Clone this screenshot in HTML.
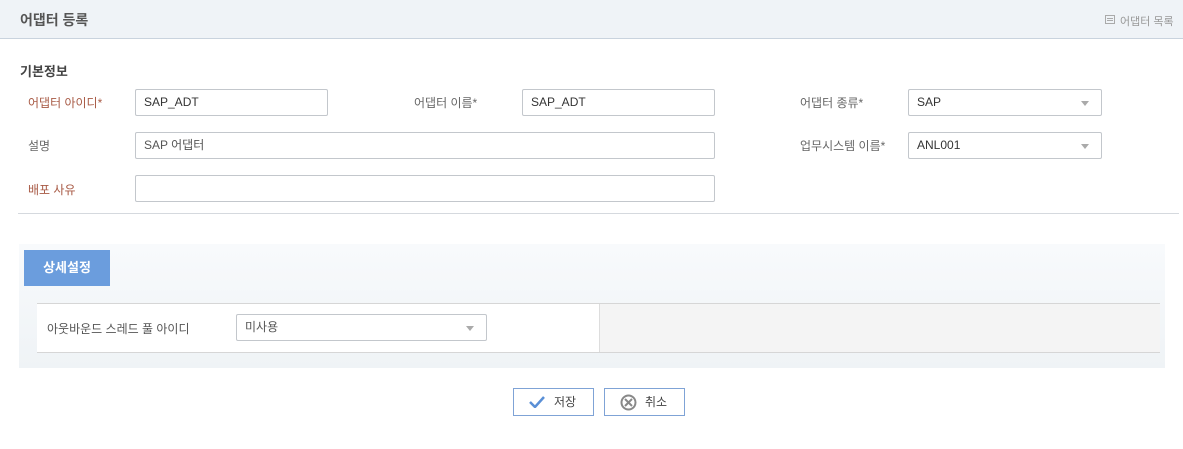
<!DOCTYPE html>
<html><head><meta charset="utf-8"><style>
*{box-sizing:border-box;margin:0;padding:0}
body{width:1183px;height:449px;background:#fff;font-family:"Liberation Sans","Noto Sans CJK KR",sans-serif;font-size:12px;color:#555;position:relative;overflow:hidden}
.a{position:absolute}
.hdr{left:0;top:0;width:1183px;height:39px;background:#eff3f7;border-bottom:1px solid #c9d3de}
.lbl{font-size:12px;color:#666;line-height:14px}
.req{color:#a85a45}
.inp{border:1px solid #c3c7cc;border-radius:2px;background:#fff;height:27px;padding-left:8px;line-height:25px;color:#333;font-size:12px}
.tri{position:absolute;right:12px;top:11px;width:0;height:0;border-left:4px solid transparent;border-right:4px solid transparent;border-top:5px solid #aaa}
.btn{border:1px solid #7fa3d6;background:#fff;height:28px;width:81px;line-height:26px;font-size:12px;color:#444}
</style></head><body>
<div class="a hdr"></div>
<div class="a" style="left:20px;top:10px;font-size:14px;color:#555;font-weight:bold">어댑터 등록</div>
<div class="a" style="left:1105px;top:15px;width:10px;height:9px;border:1px solid #aaa"></div>
<div class="a" style="left:1107px;top:18px;width:6px;height:1px;background:#aaa"></div>
<div class="a" style="left:1107px;top:20px;width:6px;height:1px;background:#aaa"></div>
<div class="a" style="left:1120px;top:13px;font-size:11px;color:#999">어댑터 목록</div>
<div class="a" style="left:20px;top:61px;font-size:13px;font-weight:bold;color:#444">기본정보</div>

<div class="a lbl req" style="left:28px;top:96px">어댑터 아이디*</div>
<div class="a inp" style="left:135px;top:89px;width:193px">SAP_ADT</div>
<div class="a lbl" style="left:414px;top:96px">어댑터 이름*</div>
<div class="a inp" style="left:522px;top:89px;width:193px">SAP_ADT</div>
<div class="a lbl" style="left:800px;top:96px">어댑터 종류*</div>
<div class="a inp" style="left:908px;top:89px;width:194px">SAP<div class="tri"></div></div>

<div class="a lbl" style="left:28px;top:139px">설명</div>
<div class="a inp" style="left:135px;top:132px;width:580px;color:#555">SAP 어댑터</div>
<div class="a lbl" style="left:800px;top:139px">업무시스템 이름*</div>
<div class="a inp" style="left:908px;top:132px;width:194px">ANL001<div class="tri"></div></div>

<div class="a lbl req" style="left:28px;top:183px">배포 사유</div>
<div class="a inp" style="left:135px;top:175px;width:580px"></div>
<div class="a" style="left:18px;top:213px;width:1161px;height:1px;background:#d5d9de"></div>

<div class="a" style="left:19px;top:244px;width:1146px;height:124px;background:linear-gradient(#f8fafc,#eff3f6)"></div>
<div class="a" style="left:24px;top:250px;width:86px;height:36px;background:#6b9ddd;color:#fff;font-weight:bold;font-size:13px;text-align:center;line-height:36px">상세설정</div>
<div class="a" style="left:37px;top:303px;width:1123px;height:50px;background:#f4f4f4;border-top:1px solid #d6d6d6;border-bottom:1px solid #d6d6d6"></div>
<div class="a" style="left:37px;top:304px;width:563px;height:48px;background:#fff;border-right:1px solid #ddd"></div>
<div class="a lbl" style="left:47px;top:322px;color:#555">아웃바운드 스레드 풀 아이디</div>
<div class="a inp" style="left:236px;top:314px;width:251px;color:#555">미사용<div class="tri"></div></div>

<div class="a btn" style="left:513px;top:388px"><svg class="a" style="left:15px;top:7px" width="16" height="12"><path d="M1 6 L6 11 L15 1" stroke="#5a8fd6" stroke-width="2.5" fill="none"/></svg><span class="a" style="left:40px;top:0">저장</span></div>
<div class="a btn" style="left:604px;top:388px"><svg class="a" style="left:15px;top:5px" width="17" height="17"><circle cx="8.5" cy="8.5" r="7" stroke="#888" stroke-width="2" fill="none"/><path d="M5 5 L12 12 M12 5 L5 12" stroke="#888" stroke-width="2"/></svg><span class="a" style="left:40px;top:0">취소</span></div>
</body></html>
